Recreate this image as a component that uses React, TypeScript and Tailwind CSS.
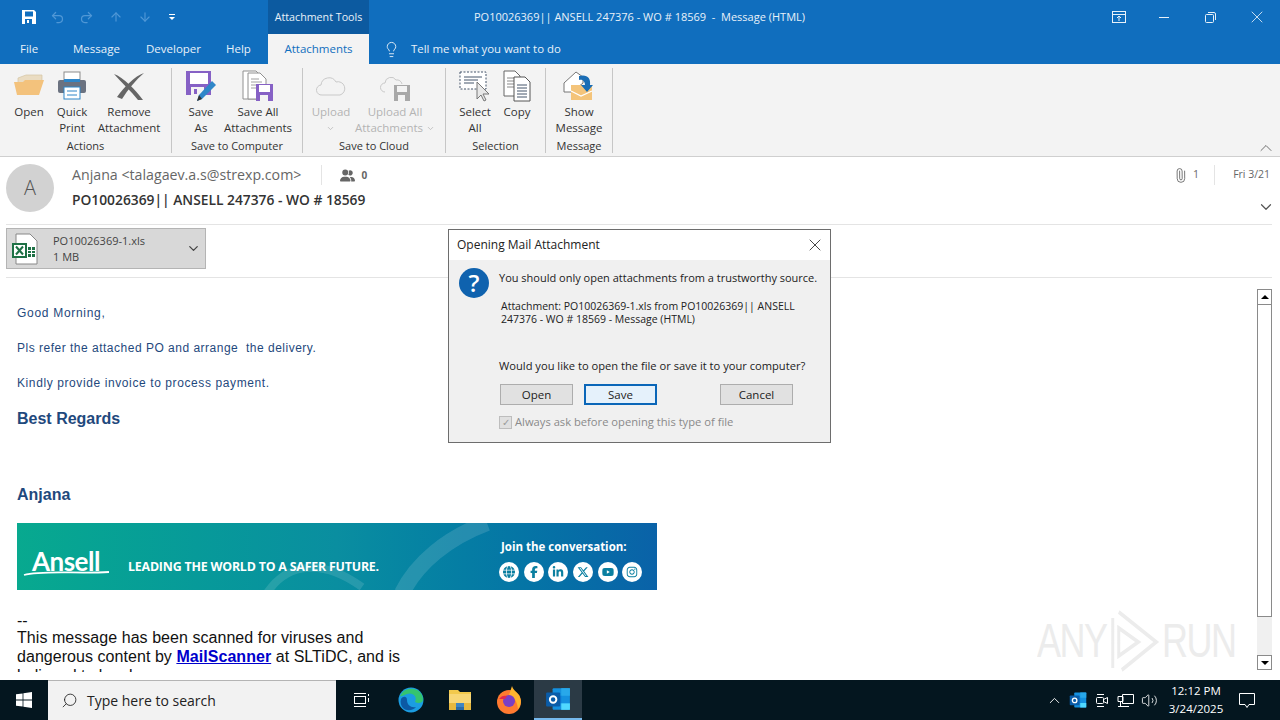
import React from "react";
import { ArrowDown, ArrowUp, ChevronDown, ChevronUp, Lightbulb, Redo2, Search, Undo2, Paperclip, Volume2, X } from "lucide-react";
import { FaFacebookF, FaGlobe, FaInstagram, FaLinkedinIn, FaUserGroup, FaXTwitter, FaYoutube } from "react-icons/fa6";

const ui = "font-['Open_Sans',sans-serif]";

function SaveIcon() {
  return (
    <svg width="16" height="16" viewBox="0 0 16 16" className="ml-[21px]">
      <path d="M1 1h12l2 2v12H1z" fill="#fff" />
      <rect x="4" y="2.5" width="8" height="5" fill="#106ebe" />
      <rect x="4" y="10" width="7" height="5" fill="#106ebe" />
      <rect x="6" y="11" width="2" height="3" fill="#fff" />
    </svg>
  );
}

function OpenIcon() {
  return (
    <svg width="32" height="32" viewBox="0 0 32 32">
      <path d="M5 8l8-3h16v8H5z" fill="#eadcc2" stroke="#d4c4a4" strokeWidth="0.7" />
      <path d="M4 25L1 12h9l2-2h19l-5 15z" fill="#f3c27c" />
    </svg>
  );
}

function PrintIcon() {
  return (
    <svg width="32" height="32" viewBox="0 0 32 32">
      <rect x="8" y="2" width="16" height="10" fill="#fff" stroke="#8b8b8b" />
      <rect x="2" y="10" width="28" height="13" rx="2" fill="#6b7280" />
      <rect x="8" y="9" width="16" height="3" fill="#2f86c8" />
      <rect x="8" y="17" width="16" height="12" fill="#fff" stroke="#2f86c8" />
      <path d="M11 21h10M11 25h10" stroke="#2f86c8" />
    </svg>
  );
}

function RemoveIcon() {
  return (
    <svg width="32" height="32" viewBox="0 0 32 32">
      <path d="M1 4c9 3 22 16 29 26l-5 0C18 21 8 12 1 4z" fill="#666" />
      <path d="M31 3C22 6 11 17 4 27l5 2C15 19 23 10 31 3z" fill="#666" />
    </svg>
  );
}

function SaveAsIcon() {
  return (
    <svg width="32" height="32" viewBox="0 0 32 32">
      <path d="M1 1h25v24H1z" fill="#8661c5" />
      <rect x="5" y="3" width="18" height="11" fill="#fff" />
      <rect x="6" y="17" width="13" height="8" fill="#f3f3f3" />
      <rect x="9" y="19" width="3" height="5" fill="#8661c5" />
      <path d="M12 31l2-6L27 11l4 4-14 14z" fill="#2f86c8" />
      <path d="M12 31l2-6 3 4z" fill="#333" />
    </svg>
  );
}

function SaveAllIcon() {
  return (
    <svg width="32" height="32" viewBox="0 0 32 32">
      <path d="M1 1h13l6 6v22H1z" fill="#fff" stroke="#909090" />
      <path d="M6 3h12l6 6v20H6z" fill="#fff" stroke="#909090" />
      <path d="M9 9h8M9 12h11M9 15h11M9 18h5" stroke="#a0a0a0" />
      <rect x="14" y="14" width="17" height="17" fill="#8661c5" />
      <rect x="17" y="15" width="11" height="7" fill="#fff" />
      <rect x="18" y="25" width="8" height="6" fill="#f3f3f3" />
    </svg>
  );
}

function CloudIcon({ small }: { small?: boolean }) {
  return (
    <svg width="32" height="32" viewBox="0 0 32 32">
      <path
        d={small ? "M6 22a4 4 0 0 1 0-9 6 6 0 0 1 11-3 5 5 0 0 1 6 4" : "M7 25a5 5 0 0 1-1-10 8 8 0 0 1 15-3 6 6 0 0 1 4 13z"}
        fill="none"
        stroke="#c9c9c9"
        strokeWidth="1"
      />
      {small && (
        <>
          <rect x="15" y="15" width="16" height="16" fill="#a8a8a8" />
          <rect x="18" y="16" width="10" height="6" fill="#f3f3f3" />
          <rect x="19" y="25" width="7" height="6" fill="#f3f3f3" />
        </>
      )}
    </svg>
  );
}

function SelectAllIcon() {
  return (
    <svg width="32" height="32" viewBox="0 0 32 32">
      <rect x="1" y="2" width="26" height="17" fill="#fff" stroke="#44546a" strokeDasharray="2 1.5" />
      <path d="M5 7h18M5 10h14M5 13h10" stroke="#44546a" />
      <path d="M18 12v17l4-4 3 6 2-1-3-6h6z" fill="#e8e8e8" stroke="#777" />
    </svg>
  );
}

function CopyIcon() {
  return (
    <svg width="32" height="32" viewBox="0 0 32 32">
      <path d="M3 1h11l5 5v20H3z" fill="#fff" stroke="#666" />
      <path d="M6 8h9M6 11h9M6 14h9M6 17h9" stroke="#888" />
      <path d="M13 7h11l5 5v19H13z" fill="#fff" stroke="#555" />
      <path d="M16 15h10M16 18h10M16 21h10M16 24h10M16 27h10" stroke="#44546a" />
    </svg>
  );
}

function ShowMessageIcon() {
  return (
    <svg width="32" height="32" viewBox="0 0 32 32">
      <path d="M1 13L13 2l7 5v6L9 22H1z" fill="#fff" stroke="#777" />
      <rect x="8" y="15" width="21" height="15" fill="#f4c47a" />
      <path d="M8 21l10 5 11-5" fill="none" stroke="#fff" strokeWidth="1.2" />
      <path d="M16 6c8-2 12 2 11 9h3l-6 7-6-7h4c0-4-3-6-6-5z" fill="#1a6db5" />
    </svg>
  );
}

function RibbonButton({ icon, lines, width, disabled, caret }: { icon: React.ReactNode; lines: string[]; width: string; disabled?: boolean; caret?: boolean }) {
  return (
    <div className={`flex flex-col items-center shrink-0 ${width}`}>
      <div className="h-[36px] flex items-center justify-center">{icon}</div>
      <div className={`text-center text-[11.5px] leading-[16px] whitespace-nowrap ${disabled ? "text-[#b4b4b4]" : "text-[#333]"}`}>
        {lines.map((line, i) => (
          <div key={i} className="flex items-center justify-center">
            {line}
            {caret && lines.length > 1 && i === lines.length - 1 && <ChevronDown size={9} className="ml-[3px]" />}
          </div>
        ))}
        {caret && lines.length === 1 && (
          <div className="flex justify-center h-[16px] items-center">
            <ChevronDown size={9} />
          </div>
        )}
      </div>
    </div>
  );
}

function RibbonGroup({ label, width, children }: { label: string; width: string; children: React.ReactNode }) {
  return (
    <div className={`flex flex-col h-[85px] mt-[4px] border-r border-[#c6c6c6] ${width}`}>
      <div className="flex h-[72px]">{children}</div>
      <div className="text-center text-[11px] leading-[14px] pt-[1px] text-[#333]">{label}</div>
    </div>
  );
}

function TitleBar() {
  return (
    <div className="h-[34px] bg-[#106ebe] flex text-white shrink-0">
      <div className="w-[268px] flex items-center">
        <SaveIcon />
        <Undo2 size={15} className="ml-[13px] text-[#4f97d6]" />
        <Redo2 size={15} className="ml-[14px] text-[#4f97d6]" />
        <ArrowUp size={14} className="ml-[15px] text-[#4f97d6]" />
        <ArrowDown size={14} className="ml-[15px] text-[#4f97d6]" />
        <div className="ml-[17px] flex flex-col items-center gap-[2px]">
          <div className="w-[6px] h-px bg-white" />
          <div className="w-0 h-0 border-l-[3px] border-r-[3px] border-t-[3px] border-l-transparent border-r-transparent border-t-white" />
        </div>
      </div>
      <div className="w-[101px] bg-[#0c5aa0] flex items-center justify-center text-[10.7px] text-[#e8f1f9]">Attachment Tools</div>
      <div className="w-[541px] flex items-center justify-center text-[11px] text-[#e8f1f9] whitespace-nowrap">
        PO10026369|| ANSELL 247376 - WO # 18569&nbsp; -&nbsp; Message (HTML)
      </div>
      <div className="flex-1 flex items-center">
        <svg width="14" height="12" viewBox="0 0 14 12" className="ml-[202px]" fill="none" stroke="#e8f1f9">
          <rect x="0.5" y="0.5" width="13" height="11" />
          <path d="M0.5 3.5h13M7 10V5M5 7l2-2 2 2" />
        </svg>
        <div className="ml-[33px] w-[10px] h-px bg-[#e8f1f9]" />
        <svg width="11" height="11" viewBox="0 0 11 11" className="ml-[36px]" fill="none" stroke="#e8f1f9">
          <rect x="0.5" y="2.5" width="8" height="8" rx="1" />
          <path d="M3 0.5h6a1.5 1.5 0 0 1 1.5 1.5v6" />
        </svg>
        <X size={20} strokeWidth={1} className="ml-[31px] text-[#e8f1f9]" />
      </div>
    </div>
  );
}

function TabRow() {
  return (
    <div className="h-[30px] bg-[#106ebe] flex items-center text-[11.5px] text-[#e8f1f9] shrink-0">
      <div className="w-[57px] pl-[20px]">File</div>
      <div className="w-[73px] pl-[16px]">Message</div>
      <div className="w-[80px] pl-[16px]">Developer</div>
      <div className="w-[58px] pl-[16px]">Help</div>
      <div className="w-[101px] h-full bg-[#f3f3f3] text-[#106ebe] flex items-center justify-center">Attachments</div>
      <Lightbulb size={17} strokeWidth={1.3} className="ml-[14px]" />
      <div className="ml-[11px] text-[11.4px]">Tell me what you want to do</div>
    </div>
  );
}

function Ribbon() {
  return (
    <div className="relative h-[93px] bg-[#f3f3f3] border-b border-[#cfcfcf] flex shrink-0">
      <RibbonGroup label="Actions" width="w-[172px]">
        <div className="flex pl-[4px]">
          <RibbonButton icon={<OpenIcon />} lines={["Open"]} width="w-[50px]" />
          <RibbonButton icon={<PrintIcon />} lines={["Quick", "Print"]} width="w-[36px]" />
          <RibbonButton icon={<RemoveIcon />} lines={["Remove", "Attachment"]} width="w-[78px]" />
        </div>
      </RibbonGroup>
      <RibbonGroup label="Save to Computer" width="w-[131px]">
        <div className="flex pl-[6px]">
          <RibbonButton icon={<SaveAsIcon />} lines={["Save", "As"]} width="w-[46px]" />
          <RibbonButton icon={<SaveAllIcon />} lines={["Save All", "Attachments"]} width="w-[68px]" />
        </div>
      </RibbonGroup>
      <RibbonGroup label="Save to Cloud" width="w-[143px]">
        <div className="flex pl-[4px]">
          <RibbonButton icon={<CloudIcon />} lines={["Upload"]} width="w-[48px]" disabled caret />
          <RibbonButton icon={<CloudIcon small />} lines={["Upload All", "Attachments"]} width="w-[80px]" disabled caret />
        </div>
      </RibbonGroup>
      <RibbonGroup label="Selection" width="w-[100px]">
        <div className="flex pl-[9px]">
          <RibbonButton icon={<SelectAllIcon />} lines={["Select", "All"]} width="w-[40px]" />
          <RibbonButton icon={<CopyIcon />} lines={["Copy"]} width="w-[44px]" />
        </div>
      </RibbonGroup>
      <RibbonGroup label="Message" width="w-[67px]">
        <RibbonButton icon={<ShowMessageIcon />} lines={["Show", "Message"]} width="w-[66px]" />
      </RibbonGroup>
      <ChevronUp size={20} strokeWidth={1} className="absolute right-[4px] bottom-[-2px] text-[#555]" />
    </div>
  );
}

function MailHeader() {
  return (
    <div className="h-[67px] flex bg-white shrink-0">
      <div className="ml-[6px] mt-[7px] w-[48px] h-[48px] rounded-full bg-[#d2d2d2] flex items-center justify-center text-[20px] font-light text-[#555]">A</div>
      <div className="ml-[18px] flex-1">
        <div className="mt-[8px] flex items-center h-[20px]">
          <span className="text-[14.2px] text-[#666]">Anjana &lt;talagaev.a.s@strexp.com&gt;</span>
          <div className="ml-[20px] w-px h-[20px] bg-[#e4e4e4]" />
          <FaUserGroup size={15} className="ml-[18px] text-[#666]" />
          <span className="ml-[6px] text-[10px] font-bold text-[#666]">0</span>
          <Paperclip size={15} strokeWidth={1.2} className="ml-[806px] text-[#555] -rotate-45" />
          <span className="ml-[5px] text-[10.5px] text-[#666]">1</span>
          <div className="ml-[15px] w-px h-[20px] bg-[#e4e4e4]" />
          <span className="ml-[18px] text-[10.5px] text-[#666]">Fri 3/21</span>
        </div>
        <div className="mt-[5px] flex items-center justify-between pr-[2px]">
          <span className="text-[13.8px] font-semibold text-[#333]">PO10026369|| ANSELL 247376 - WO # 18569</span>
          <ChevronDown size={24} strokeWidth={1.6} className="text-[#555] relative top-[7px] h-[18px]" />
        </div>
      </div>
    </div>
  );
}

function XlsIcon() {
  return (
    <svg width="28" height="32" viewBox="0 0 28 32">
      <path d="M5 1h14l7 7v23H5z" fill="#fff" stroke="#888" />
      <rect x="17" y="14" width="7" height="10" fill="#1e7145" />
      <path d="M17 17.5h7M17 20.5h7M20.5 14v10" stroke="#fff" />
      <rect x="1" y="10" width="15" height="15" fill="#1e7145" />
      <rect x="3" y="12" width="11" height="11" fill="#fff" />
      <path d="M5 13.5l7 8M12 13.5l-7 8" stroke="#1e7145" strokeWidth="2" />
    </svg>
  );
}

function AttachmentRow() {
  return (
    <div className="h-[54px] mx-[6px] mr-[8px] border-y border-[#e4e4e4] shrink-0 bg-white pt-[3px]">
      <div className="w-[200px] h-[41px] bg-[#d8d8d8] border border-[#b4b4b4] flex items-center">
        <div className="ml-[4px]">
          <XlsIcon />
        </div>
        <div className="ml-[14px] flex-1 text-[11px] leading-[16px] text-[#444]">
          <div>PO10026369-1.xls</div>
          <div>1 MB</div>
        </div>
        <ChevronDown size={15} className="mr-[4px] text-[#444]" />
      </div>
    </div>
  );
}

function SocialIcons() {
  const items = [FaGlobe, FaFacebookF, FaLinkedinIn, FaXTwitter, FaYoutube, FaInstagram];
  return (
    <div className="flex gap-[4.7px] mt-[7px] -ml-[2px]">
      {items.map((Icon, i) => (
        <div key={i} className="w-[20px] h-[20px] rounded-full bg-white text-[#0a7fa0] flex items-center justify-center">
          <Icon size={12} />
        </div>
      ))}
    </div>
  );
}

function Banner() {
  return (
    <div className="relative overflow-hidden w-[640px] h-[67px] bg-gradient-to-r from-[#08a98f] via-[#0a8ea0] to-[#0a62a8] flex items-center text-white font-['Open_Sans',sans-serif] mt-[18px]">
      <svg className="absolute inset-0" width="640" height="67" viewBox="0 0 640 67" fill="none">
        <path d="M385 70C400 40 430 15 470 0" stroke="#fff" strokeOpacity="0.13" strokeWidth="16" />
        <path d="M250 70C270 40 305 35 345 64" stroke="#fff" strokeOpacity="0.12" strokeWidth="8" />
        <path d="M7 52C25 47 60 51 92 49" stroke="#fff" strokeWidth="1.8" />
      </svg>
      <div className="relative ml-[15px] w-[96px] text-[26px] font-bold leading-none mt-[9px] tracking-[-0.5px] [font-family:Lato,sans-serif]">Ansell</div>
      <div className="relative text-[12.4px] font-bold tracking-[-0.2px] mt-[22px]">LEADING THE WORLD TO A SAFER FUTURE.</div>
      <div className="absolute left-[484px] top-[16px]">
        <div className="text-[11.5px] font-bold leading-[16px] whitespace-nowrap">Join the conversation:</div>
        <SocialIcons />
      </div>
    </div>
  );
}

function MailBody() {
  return (
    <div className="relative flex-1 min-h-0 flex bg-white overflow-hidden">
      <div className="flex-1 pl-[17px] pt-[28px] font-['Liberation_Sans',sans-serif] h-[394px] overflow-hidden">
        <div className="text-[12px] leading-[14px] tracking-[0.7px] text-[#1f497d]">Good Morning,</div>
        <div className="mt-[21px] text-[12px] leading-[14px] tracking-[0.5px] text-[#1f497d]">Pls refer the attached PO and arrange&nbsp; the delivery.</div>
        <div className="mt-[21px] text-[12px] leading-[14px] tracking-[0.6px] text-[#1f497d]">Kindly provide invoice to process payment.</div>
        <div className="mt-[19px] text-[16px] leading-[20px] font-bold text-[#1f497d]">Best Regards</div>
        <div className="mt-[56px] text-[16px] leading-[20px] font-bold text-[#1f497d]">Anjana</div>
        <Banner />
        <div className="mt-[21px] text-[16px] leading-[19px] text-[#111] w-[420px]">
          <div className="h-[17px]">--</div>
          <div className="tracking-[0.05px]">This message has been scanned for viruses and</div>
          <div className="tracking-[0.05px]">
            dangerous content by <a className="font-bold text-[#0000cc] underline">MailScanner</a> at SLTiDC, and is
          </div>
          <div>believed to be clean.</div>
        </div>
      </div>
      <div className="w-[15px] mr-[8px] mt-[11px] mb-[10px] bg-[#f0f0f0] flex flex-col">
        <div className="h-[16px] bg-white border border-[#8a8a8a] flex items-center justify-center">
          <div className="w-0 h-0 border-l-[4px] border-r-[4px] border-b-[4px] border-l-transparent border-r-transparent border-b-black" />
        </div>
        <div className="h-[312px] bg-white border-x border-b border-[#8a8a8a]" />
        <div className="flex-1" />
        <div className="h-[15px] bg-white border border-[#8a8a8a] flex items-center justify-center">
          <div className="w-0 h-0 border-l-[4px] border-r-[4px] border-t-[4px] border-l-transparent border-r-transparent border-t-black" />
        </div>
      </div>
      <div className="absolute left-[1037px] top-[330px] flex items-center text-[48px] leading-none text-[#ececec] font-['Liberation_Sans',sans-serif] scale-x-75 origin-left tracking-[-2px]">
        <span>ANY</span>
        <svg width="66" height="66" viewBox="0 0 66 66" fill="none" stroke="#ececec" strokeWidth="4" className="mx-[4px]">
          <path d="M12 4l50 30-46 28M4 10v50M12 20l26 14-26 14z" />
        </svg>
        <span>RUN</span>
      </div>
    </div>
  );
}

function Dialog() {
  const btn = "w-[73px] h-[21px] bg-[#e1e1e1] border border-[#adadad] text-[11.5px] text-[#222] flex items-center justify-center";
  return (
    <div className={`absolute left-[448px] top-[229px] w-[383px] h-[214px] border border-[#6d6d6d] bg-[#f0f0f0] text-[11px] text-[#222] ${ui}`}>
      <div className="h-[30px] bg-white flex items-center justify-between pl-[8px] pr-[5px] text-[12px]">
        Opening Mail Attachment
        <X size={20} strokeWidth={1} />
      </div>
      <div className="flex pl-[10px] pt-[8px]">
        <div className="w-[30px] h-[30px] rounded-full bg-[#0f62ae] text-white flex items-center justify-center text-[24px] font-semibold leading-none">?</div>
        <div className="ml-[10px] mt-[2px]">
          <div className="h-[16px] leading-[16px]">You should only open attachments from a trustworthy source.</div>
          <div className="ml-[2px] mt-[14px] leading-[13px] w-[310px] text-[10.5px]">Attachment: PO10026369-1.xls from PO10026369|| ANSELL 247376 - WO # 18569 - Message (HTML)</div>
          <div className="mt-[32px] leading-[16px] whitespace-nowrap text-[11.15px]">Would you like to open the file or save it to your computer?</div>
        </div>
      </div>
      <div className="flex mt-[10px] pl-[51px]">
        <div className={btn}>Open</div>
        <div className={`${btn} ml-[11px] !border-2 !border-[#0a66b8] !bg-[#e5f1fb]`}>Save</div>
        <div className={`${btn} ml-[63px]`}>Cancel</div>
      </div>
      <div className="flex items-center mt-[9px] pl-[50px] text-[#8a8a8a]">
        <div className="w-[13px] h-[13px] bg-[#e0e0e0] border border-[#bdbdbd] flex items-center justify-center text-[10px] leading-none text-[#9a9a9a]">✓</div>
        <span className="ml-[3px] text-[11.2px]">Always ask before opening this type of file</span>
      </div>
    </div>
  );
}

function WinLogo() {
  return (
    <svg width="16" height="16" viewBox="0 0 16 16" fill="#fff">
      <path d="M0 2.3L6.6 1.4v6.2H0zM7.4 1.3L16 0v7.6H7.4zM0 8.4h6.6v6.2L0 13.7zM7.4 8.4H16V16l-8.6-1.3z" />
    </svg>
  );
}

function TaskView() {
  return (
    <svg width="18" height="18" viewBox="0 0 18 18" fill="none" stroke="#fff">
      <rect x="2.5" y="5.5" width="11" height="7" />
      <path d="M2 2.5h12M2 15.5h12M16.5 3v2M16.5 7v4" />
    </svg>
  );
}

function EdgeIcon() {
  return (
    <svg width="26" height="26" viewBox="0 0 26 26">
      <circle cx="13" cy="13" r="12.5" fill="#1b9de2" />
      <path d="M2 9C5 2 13 0 19 3c4 2 6 6 6 10 0 3-5 4-8 2 3-6-3-10-8-8-3 1-6 3-7 2z" fill="#35c46f" />
      <path d="M9 13c0 5 4 8 9 7-2 3-9 5-13 1-2-2-3-6-2-9 2-3 6-3 6 1z" fill="#0c59a4" />
    </svg>
  );
}

function FolderIcon() {
  return (
    <svg width="24" height="22" viewBox="0 0 24 22">
      <path d="M1 1h9l2 2h11v4H1z" fill="#f2c94c" />
      <rect x="1" y="5" width="22" height="16" fill="#f8d775" />
      <rect x="1" y="14" width="22" height="7" fill="#e7b93f" />
      <rect x="8" y="14" width="8" height="4" fill="#3f86c4" />
      <rect x="8" y="18" width="8" height="3" fill="#2b6ca8" />
    </svg>
  );
}

function FirefoxIcon() {
  return (
    <svg width="26" height="28" viewBox="0 0 26 28">
      <circle cx="13" cy="16" r="12" fill="#ff7a30" />
      <path d="M16 0c1 4 4 5 7 9 3 5 2 11-1 14-1-8-4-12-9-14 1-3 2-6 3-9z" fill="#ffb52e" />
      <circle cx="13" cy="15" r="6" fill="#7b3fc4" />
      <path d="M3 13c2-3 5-4 8-3l-2 3z" fill="#e22850" />
    </svg>
  );
}

function OutlookIcon({ size }: { size: number }) {
  return (
    <svg width={size} height={size} viewBox="0 0 24 24">
      <rect x="7" y="2" width="16" height="20" rx="1" fill="#1490df" />
      <rect x="15" y="2" width="8" height="7" fill="#28a8ea" />
      <rect x="7" y="9" width="8" height="7" fill="#0f78d4" />
      <rect x="15" y="16" width="8" height="6" fill="#50d9ff" />
      <rect x="1" y="6" width="13" height="13" rx="1" fill="#0a5ca8" />
      <circle cx="7.5" cy="12.5" r="3" fill="none" stroke="#fff" strokeWidth="1.8" />
    </svg>
  );
}

function Taskbar() {
  return (
    <div className="h-[40px] bg-[#04161f] flex items-center text-white shrink-0">
      <div className="w-[48px] flex justify-center">
        <WinLogo />
      </div>
      <div className="w-[288px] h-full bg-[#f2f2f2] border-t border-[#b4b4b4] flex items-center text-[#222]">
        <Search size={17} strokeWidth={1.2} className="ml-[13px] -scale-x-100" />
        <span className={`ml-[9px] text-[14px] ${ui}`}>Type here to search</span>
      </div>
      <div className="w-[50px] flex justify-center">
        <TaskView />
      </div>
      <div className="w-[50px] flex justify-center">
        <EdgeIcon />
      </div>
      <div className="w-[48px] flex justify-center">
        <FolderIcon />
      </div>
      <div className="w-[50px] flex justify-center">
        <FirefoxIcon />
      </div>
      <div className="w-[48px] h-full bg-[#2b3a45] border-b-2 border-[#76b9ed] flex items-center justify-center">
        <OutlookIcon size={26} />
      </div>
      <div className="flex-1 flex items-center justify-end">
        <ChevronUp size={17} strokeWidth={1.3} />
        <div className="ml-[6px]">
          <OutlookIcon size={18} />
        </div>
        <svg width="16" height="16" viewBox="0 0 16 16" fill="none" stroke="#fff" className="ml-[7px]">
          <rect x="2.5" y="5.5" width="7" height="6" rx="1" />
          <path d="M9.5 7.5l4-2v6l-4-2M3 2.5h7M3 14.5h7" />
        </svg>
        <svg width="17" height="15" viewBox="0 0 17 15" fill="none" stroke="#fff" className="ml-[7px]">
          <path d="M5.5 1.5h11v9h-11zM1 3.5h5v5H1zM3.5 8.5v5M1 13.5h11" />
        </svg>
        <Volume2 size={17} strokeWidth={1.2} className="ml-[7px]" />
        <div className={`ml-[9px] w-[58px] text-center text-[11.5px] leading-[18px] ${ui}`}>
          <div>12:12 PM</div>
          <div>3/24/2025</div>
        </div>
        <svg width="18" height="18" viewBox="0 0 18 18" fill="none" stroke="#fff" className="ml-[13px] mr-[24px]">
          <path d="M1.5 2.5h15v11H11l-2 3-2-3H1.5z" />
        </svg>
      </div>
    </div>
  );
}

export default function App() {
  return (
    <div className={`relative w-[1280px] h-[720px] overflow-hidden flex flex-col bg-white ${ui}`}>
      <TitleBar />
      <TabRow />
      <Ribbon />
      <MailHeader />
      <AttachmentRow />
      <MailBody />
      <Taskbar />
      <Dialog />
    </div>
  );
}
